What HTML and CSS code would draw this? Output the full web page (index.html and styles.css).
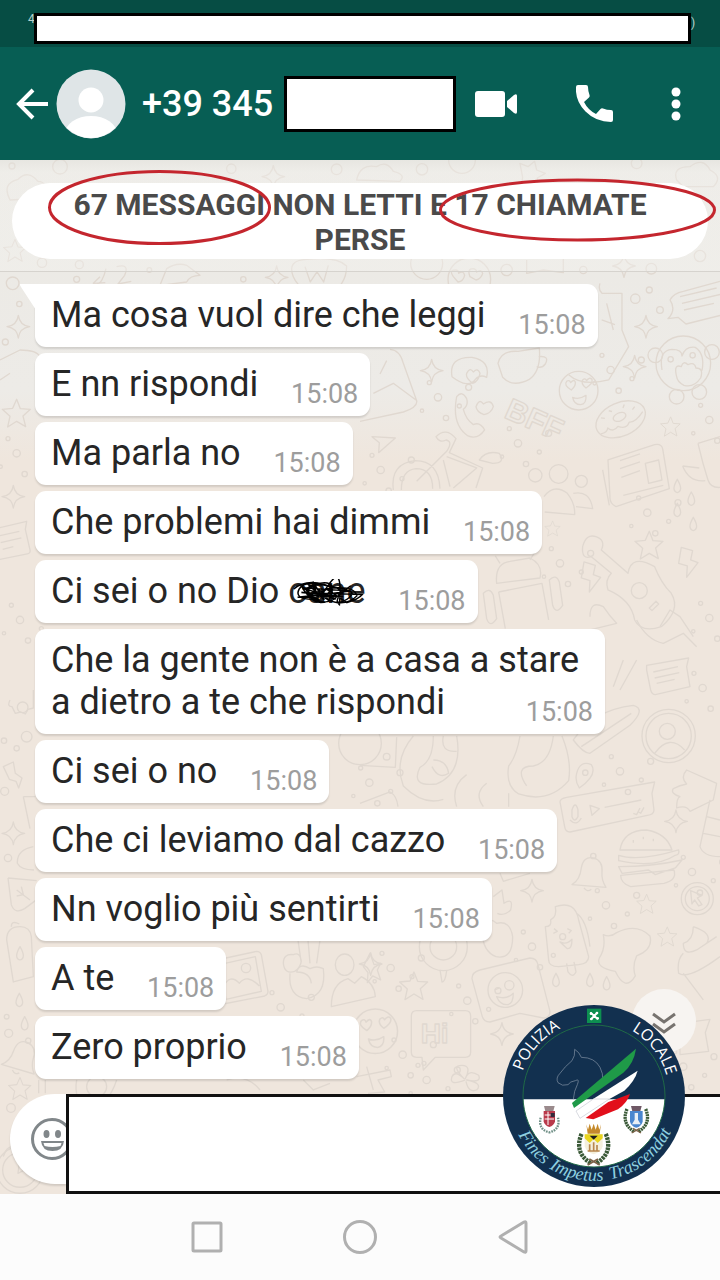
FILE: index.html
```html
<!DOCTYPE html>
<html lang="it">
<head>
<meta charset="utf-8">
<meta name="viewport" content="width=device-width, initial-scale=1">
<title>Chat</title>
<link rel="stylesheet" href="styles.css">
</head>
<body>
<div class="status">
  <span class="status__net">4</span>
  <div class="status__mask"></div>
  <span class="status__end">)</span>
</div>
<header class="bar">
  <button class="bar__btn bar__back" aria-label="Indietro">
    <svg width="34" height="34" viewBox="0 0 34 34" fill="none" stroke="#fff" stroke-width="4"><path d="M32 17H3M17 3 3 17l14 14"/></svg>
  </button>
  <svg class="bar__avatar" width="70" height="70" viewBox="0 0 70 70">
    <clipPath id="av"><circle cx="35" cy="35" r="34"/></clipPath>
    <circle cx="35" cy="35" r="34.500" fill="#dfe5e7"/>
    <g clip-path="url(#av)" fill="#fff"><circle cx="35" cy="31" r="12.500"/><ellipse cx="35" cy="65" rx="26" ry="18"/></g>
  </svg>
  <h1 class="bar__name">+39 345</h1>
  <div class="bar__mask"></div>
  <div class="bar__actions">
    <button class="bar__btn" aria-label="Videochiamata">
      <svg width="42" height="26" viewBox="0 0 42 26" fill="#fff"><rect width="30" height="26" rx="3"/><path d="M32 10l7-6q3-2 3 1v16q0 3-3 1l-7-6z"/></svg>
    </button>
    <button class="bar__btn" aria-label="Chiama">
      <svg width="37" height="37" viewBox="0 0 37 37" fill="#fff"><path d="M2 0h8q2 0 2 2 0 4 1.500 8 .5 1.500-.5 2.500L8 17q4 8 12 12l4.500-5q1-1 2.500-.5 4 1.500 8 1.500 2 0 2 2v8q0 2-2 2Q20 37 9.500 26.500T0 2Q0 0 2 0z"/></svg>
    </button>
    <button class="bar__btn" aria-label="Altre opzioni">
      <svg width="10" height="34" viewBox="0 0 10 34" fill="#fff"><circle cx="5" cy="5" r="4.500"/><circle cx="5" cy="17" r="4.500"/><circle cx="5" cy="29" r="4.500"/></svg>
    </button>
  </div>
</header>
<main class="chat">
  <svg class="wallpaper" viewBox="0 160 720 1034" preserveAspectRatio="xMidYMin slice" aria-hidden="true">
    <defs>
      <g id="smile"><circle r="58"/><path d="M-22-2q-24-14-14-26 8-6 12 4 10-12 14-2 2 12-12 24zM22-8q-16-12-10-24 8-8 12 2 8-12 16-4 4 12-18 26zM-18 20q20 8 40-6 2 26-16 28-20 0-24-22z"/></g>
      <path id="star" d="M0-42 11-14l30 2-22 20 8 32-27-16-27 17 7-32-23-21 31-3z"/>
      <path id="spark" d="M0-34q4 30 34 34-30 4-34 34-4-30-34-34 30-4 34-34z"/>
      <path id="bolt" d="M-20-44 14-34 8-6l22 8L-4 46l2-34-26-8z"/>
      <path id="drop" d="M0-20q20 34 0 40-20-6 0-40z"/>
      <g id="bell"><path d="M-50 24q24-14 28-50 6-36 36-30 30 8 26 44-2 22 12 44z"/><circle cx="14" cy="-62" r="8"/><path d="M-14 34q10 14 22 4"/></g>
      <g id="dots"><circle r="11"/><circle cx="64" cy="26" r="6"/><circle cx="24" cy="62" r="8"/><circle cx="-48" cy="40" r="5"/><circle cx="92" cy="-30" r="9"/><circle cx="-26" cy="-44" r="6"/></g>
      <g id="note"><path d="M-60-30 50-56l-4 24 14 62q2 10-8 12l-90 18q-10 0-12-8l-16-72q0-8 6-10z"/><path d="M-34-12 28-26M-28 8 34-6M-22 28 10 20"/></g>
      <g id="photo"><path d="M-70-40 50-66q10 0 14 10l20 110q0 10-10 14L-50 92q-10 0-12-10L-80-28q0-10 10-12z"/><path d="M-62-26 46-50l18 104-106 24zM-50 40q20-40 48-10 24-30 60 8"/><circle cx="18" cy="-16" r="14"/></g>
    </defs>
    <g transform="translate(0 160) scale(.3333)">
      <path d="M30 120q-26-50 24-62 30-30 60 6 30 0 26 50zM300 350l-20 20 36-2M288 376q20-6 30-50M350 320q40-10 24 26l-20 26 40-8M480 376l20-50q30-20 60-10l40 30q-30 0-40 20zM880 350q-20-50 40-52 90-10 120 20 0 60-60 90-80-10-100-58zM915 320l16 46 20-30 20 30 14-50"/>
      <use href="#spark" x="820" y="50"/><use href="#spark" x="830" y="352"/><use href="#spark" x="55" y="500"/><use href="#star" transform="translate(45 272) scale(.8)"/>
      <circle cx="38" cy="370" r="19"/><circle cx="58" cy="432" r="8"/><circle cx="16" cy="546" r="9"/><circle cx="126" cy="308" r="14"/><circle cx="238" cy="314" r="12"/><circle cx="230" cy="358" r="9"/><circle cx="694" cy="26" r="14"/><circle cx="36" cy="18" r="9"/><circle cx="180" cy="20" r="22"/><circle cx="448" cy="330" r="7"/><circle cx="730" cy="358" r="8"/><circle cx="1010" cy="28" r="16"/>
      <path d="M0 600l60-30q50 0 60 20M0 660l30-20"/><use href="#note" x="30" y="1140"/><use href="#dots" x="60" y="1380"/>
      <use href="#star" x="50" y="760"/><use href="#dots" x="50" y="880"/><use href="#spark" x="40" y="1010"/>
    </g>
    <g transform="translate(360 160) scale(.3333)">
      <circle cx="200" cy="310" r="48"/><circle cx="328" cy="358" r="64"/><path d="M280 350q-14-20 6-20 10 0 10 10 14-10 18 6-4 18-20 20zM330 350q-10-24 10-24 10 2 10 10 14-10 18 4-4 16-20 20zM500 300v40l50-10 60 8V296M-10 60q10-50 60-40 30-20 50 14 40 10 20 30zM480 10l24 10 20-16 6 26 26 10-24 14 2 30-26-16-24 10 4-26zM950 60q-14-40 40-40 40-30 60 10 40 20 10 50H970zM930 420q10-20 40-26l110-30M930 420q20 30-6 56l30-4 24 20 120-30M960 410l110-26M966 430l120-28M972 450l90-20M720 370q-6 20 6 30h60v110l20 50-60 100q-80 20-120-16M740 430l20 80M725 480l40 14"/>
      <use href="#spark" x="792" y="318"/><use href="#spark" x="858" y="500"/>
      <circle cx="186" cy="28" r="17"/><circle cx="1020" cy="288" r="17"/><circle cx="874" cy="326" r="16"/><circle cx="440" cy="330" r="17"/><circle cx="826" cy="416" r="14"/><circle cx="900" cy="450" r="10"/><circle cx="868" cy="390" r="9"/><circle cx="670" cy="330" r="11"/><circle cx="830" cy="10" r="16"/><circle cx="306" cy="0" r="40"/>
    </g>
    <g transform="translate(360 350) scale(.3333)">
      <path d="M0 214l130-28q44-14 40-34L130 40q-10-40-40-42M40 130l60-30 68 50M60 72l20-40M414 40q10-40 60-36l64-10q6 70-30 94-50 26-80-6zM536 20q34-4 20 22-10 14-26 8M276 80q-10-60 60-58 56 10 44 60-20-10-34 6-20 30-70-8zM320 70q10-20 20-4 14-14 20 4-4 24-22 30-22-16-18-30zM290 140q16-20 30 6 6 20-10 32 8 30 30 46 20-10 34 16-20 30-50 18-50-34-34-118zM348 170q10-26 22-8 24-16 30 8-6 20-28 24-22-8-24-24z"/>
      <ellipse cx="970" cy="40" rx="82" ry="82"/><circle cx="886" cy="16" r="22"/><circle cx="1056" cy="6" r="22"/><circle cx="932" cy="28" r="8"/><circle cx="998" cy="16" r="8"/><path d="M906 60q-10-60 30-62 30 0 30 20 10-30 40-26 30 20 20 70M950 80q-10-40 14-30 6-20 20-6 20-10 24 10 24 0 14 30-20 30-50 22-20-10-22-26z"/><circle cx="950" cy="140" r="22"/><circle cx="1018" cy="126" r="22"/>
      <use href="#smile" x="656" y="122"/><use href="#spark" x="215" y="62"/><use href="#spark" x="824" y="50"/><use href="#star" transform="translate(932 230) scale(.7)"/><use href="#star" x="868" y="586"/><use href="#bolt" x="692" y="680"/><use href="#bolt" x="984" y="636"/><use href="#star" transform="translate(578 536) scale(.55)"/>
      <g transform="rotate(24 480 180)" font-family="Liberation Sans" font-weight="700" font-size="92"><text x="442" y="220">BFF</text></g>
      <g transform="rotate(-24 782 208)"><ellipse cx="782" cy="208" rx="78" ry="50"/><ellipse cx="782" cy="200" rx="20" ry="12"/><path d="M710 224q20 4 26-8 10 20 30 8 20 20 36 2 14 10 50-12M730 180l10 6M760 170l8 6M810 172l-8 8M836 190l-10 6"/></g>
      <path d="M36 260l70 4-50 44 2-30zM100 420q-10-80 66-88 70 0 74 84M124 420q0-60 44-64 50 0 50 60M170 394l90-90q20-30-2-34-20 10-30-10 30-30 60 6l-20 42 100 46-20 60M250 330l20 80M260 320l90 34-70 60M358 330q20-30 60-20 20 30-20 30z"/>
      <circle cx="526" cy="376" r="20"/><circle cx="596" cy="372" r="28"/><circle cx="664" cy="394" r="18"/><path d="M552 440q30-40 70-10 24 30 22 64l-90-8M640 430q50-10 58 46l-50-6M744 330l140-46q20-4 24 12l20 120-160 54q-20-10-18-30zM728 360l20 106M856 340l40-10 10 60-40 10zM780 332l60-20M780 356l60-20M784 382l56-20M790 436l120-30M1014 280l66-20M1014 280q14 60 30 110 10 30 50 20M968 348l50 6M968 348q20 50 68 44"/>
      <path d="M668 590q10-40 40-30 30 10 16 40l80 70q10-60 80-20 20 50 50 80 30 50-30 100-60 20-80-20-10-60-80-90-10-30 10-50l-60-50q-30 10-26-30z"/><circle cx="838" cy="722" r="24"/><path d="M868 774l20-20 8 8-20 20z"/>
      <path d="M410 700q-6-60 40-66l60-10q40 20 30 60zM420 640l-14-22M510 630l14-22M416 726l130-26 20 110M416 726l20 110M370 730q20-20 30 6l10 70q-20 30-30 0zM568 690q20-20 30 6l10 70q-20 30-30 0zM690 800q0-50 40-30 20 30 40 50l-80 20M900 830l30-50 30 20 40 60"/>
      <use href="#drop" x="952" y="408"/><use href="#drop" x="994" y="446"/><use href="#drop" x="952" y="480"/><use href="#drop" x="1000" y="522"/><use href="#dots" x="234" y="142"/><use href="#dots" x="474" y="280"/><use href="#dots" x="862" y="488"/><use href="#dots" x="600" y="640"/><use href="#dots" x="1048" y="210"/><use href="#dots" x="752" y="60"/><use href="#dots" x="1048" y="804"/><use href="#dots" x="62" y="360"/>
    </g>
    <g transform="translate(360 620) scale(.3333)">
      <path d="M830 0q30 60 80 70l60-30 40 40M760 200l30-80M780 210l50-90M860 136l126-22-6 26 10 60-104 24q-10 0-14-14l-12-60zM880 156l74-16M884 174l74-16M890 190l54-12M640 360q60-90 180-104 40 10-10 60l-120 84q-20 0-50-40zM664 380l150-100"/>
      <circle cx="926" cy="348" r="80"/><circle cx="926" cy="348" r="68"/><circle cx="922" cy="334" r="24"/><path d="M884 400q44-60 90-10"/>
      <path d="M0 436l106 6 4-90M160 348q-60 70-30 150 60 60 120 40M290 348q20 110-60 144-80 10-50-50 40-20 40-94M220 420q40 0 46 40-30 20-50-20M250 348q-10 50 40 46M480 348q-10 60-34 90-10 60 30 84 90 30 150-40 10-60-20-134M580 348q-10 80-60 90-60 0-20 60M290 560q-20-60 30-96M380 490q-40 30-10 70M446 520v40M0 550l90-34q20 10 24 44"/>
      <circle cx="0" cy="370" r="64"/><circle cx="80" cy="410" r="10"/><path d="M650 460q10-40 44-26 20 30-36 70-14-20-8-44z"/><circle cx="676" cy="458" r="8"/>
      <path d="M600 546q0-10 20-14l264-46-8 34 6 50q0 14-20 16L630 636q-14 0-16-16zM690 556l28 10-22 20zM734 562l110-22M636 570q10-30 18 0v20q-10 20-18 0zM630 600q20 20 34-6M820 580l10 4 10-20M836 576l6 4 10-18"/>
      <path d="M980 450l90 40-10 50-70 34q-10-20-40-10 0-30 10-34-30-10-20-24 20-10 40-14-20-20 0-42zM1050 540l-30 140q10 30 60 30M1040 590l40 10M1030 640l50 10"/>
      <path d="M780 690q10-60 80-60 60 10 76 60zM776 706q60 20 180-16 4 14-10 16-60 40-170 16zM776 740q100 0 190-20l-20 24-60 20-20-14-80 10zM782 766l160-16q10 30-30 40l-100 10q-30-10-30-34zM820 660v8M850 650v8M880 656v8"/>
      <use href="#bell" x="686" y="770"/><use href="#spark" x="516" y="812"/><use href="#spark" x="948" y="604"/><use href="#star" transform="translate(860 852) scale(.7)"/><use href="#star" transform="translate(922 950) scale(.7)"/>
      <circle cx="1012" cy="836" r="48"/><circle cx="1012" cy="836" r="36"/><path d="M992 812l34 14-14 8 14 20-10 4-12-18-8 12z"/>
      <path d="M556 920q20 0 16-20 20-10 14-40 60-20 70 40l30 110q0 20-30 24l-60 6q-30 0-30-20zM620 1030l4 26q14 20 24 0l-6-30M650 880q30 20 40 100M580 940l12-6-10-8M622 926l12 6-8 8M600 966q20 10 36-8 0 30-14 28z"/>
      <path d="M730 944q20 10 40-6 60-30 100 10 10 40-40 60-14 30-4 60-30 50-60-14-60-10-48-40 20-30 12-70zM1000 920q0 40-30 50 0 40 40 20l60-40M970 1000q-20 20-14 60 30 20 124-50M970 1060l60 80M1000 920q60 20 40 50"/>
      <circle cx="250" cy="980" r="72"/><circle cx="250" cy="980" r="40"/><path d="M240 1050l6 36q10 0 14-34M370 910q20-20 40 0 40-10 48 40 0 70-50 60-50-20-38-100zM400 830l26-20 6 40q30-20 20 20-20 20-40 10M420 760l10 24 80-24M10 1040l20-40 12 34 20-4-10 20 10 30-24-12-16 20 2-30z"/>
      <use href="#dots" x="1028" y="204"/><use href="#dots" x="780" y="454"/><use href="#dots" x="738" y="856"/><use href="#dots" x="996" y="756"/><use href="#dots" x="516" y="980"/><use href="#dots" x="28" y="488"/><use href="#drop" x="588" y="1080"/><use href="#drop" x="690" y="1080"/><use href="#drop" x="740" y="1090"/>
    </g>
    <g transform="translate(220 900) scale(.3333)">
      <use href="#photo" x="60" y="220"/><path d="M190 190q0-30 30-26 20-10 24 20-4 20-20 30-30 10-34-24zM244 190l-10-70M270 190l-6-70M290 190l10-70M210 220q-6 70 50 76 60-10 50-90-20-10-40 0-30-20-40 10 40 0 44 34M334 320q0-70 50-84l20 14 20-20q40 20 42 60z"/><ellipse cx="374" cy="194" rx="28" ry="32"/>
      <use href="#spark" x="452" y="192"/><use href="#star" x="582" y="258"/><use href="#smile" transform="translate(466 394) scale(1.15)"/>
      <path d="M590 332h146q16 0 16 16v108q0 16-16 16h-90l-36 38-4-38h-16q-16 0-16-16V348q0-16 16-16zM780 210l150-36q20 0 24 20l36 140q0 20-20 20l-70-14-90 26q-20 0-24-20l-30-110q0-20 24-26z"/><text x="602" y="430" font-family="Liberation Sans" font-weight="700" font-size="84">Hi</text>
      <circle cx="856" cy="270" r="52"/><circle cx="868" cy="256" r="14"/><path d="M824 270l14-6M830 290q30 10 50-10 0 34-20 34-20 0-30-24z"/><use href="#spark" x="846" y="402"/>
      <path d="M736 540q-50 20-40-10 10-20 36 6-40-40-6-40 30 0 10 40 10-30 40-10 10 24-36 14 50 10 30 30-24 10-32-26M410 530l100-20 4 20-40 10 20 36-50 4M440 500l20 70M20 540q60-20 100 30M250 540l30 30 50-20"/>
      <use href="#dots" x="548" y="464"/><use href="#dots" x="512" y="204"/><use href="#dots" x="742" y="302"/><use href="#dots" x="620" y="540"/><use href="#dots" x="182" y="322"/>
      <path d="M1380 370l90-12-14 40 10 56-86 10z"/><use href="#dots" x="1390" y="500"/>
    </g>
    <g transform="translate(0 700) scale(.3333)">
      <path d="M30 0q-10 20 6 20l10 20 16-4 14 6 8-14 16-4V-30M10 200l30-14 6 34 20 14-10 30-8-20-20-6zM70 290h36M70 290l20 96M100 440q-50 10-48 50 10 20 50 20M24 534l86 8M24 534l10 80q10 30 40 12l40-30M50 570l40 30M64 560l6 24-20 4M20 720q0-40 40-40 30 0 34 30l6 120-60 16zM34 680q0-20 24-8"/><circle cx="68" cy="22" r="16"/>
      <use href="#drop" x="60" y="760"/><use href="#drop" x="58" y="900"/><use href="#drop" x="74" y="970"/><use href="#spark" x="40" y="400"/><use href="#bell" transform="translate(58 1080) rotate(12)"/><use href="#star" transform="translate(60 1166) scale(.8)"/>
      <circle cx="14" cy="274" r="12"/><circle cx="80" cy="110" r="16"/><circle cx="12" cy="122" r="8"/><circle cx="50" cy="145" r="8"/><circle cx="24" cy="474" r="11"/><circle cx="26" cy="1000" r="12"/><circle cx="20" cy="950" r="7"/><circle cx="33" cy="1224" r="13"/><path d="M116 1140v40M136 1140v40M230 1140q-10 60 30 80 60 10 90-80"/><circle cx="290" cy="1160" r="30"/>
      <circle cx="60" cy="1410" r="52"/><circle cx="60" cy="1410" r="70"/><path d="M60 1370l-6 50 20-10M10 1370q10-40 50-30"/>
    </g>
  </svg>

  <section class="banner">
    <h2 class="banner__pill">67 MESSAGGI NON LETTI E 17 CHIAMATE PERSE</h2>
    <svg class="banner__marks" viewBox="0 160 720 111" preserveAspectRatio="none" fill="none" stroke="#c4262e" stroke-width="3" aria-hidden="true">
      <ellipse cx="159.500" cy="207.500" rx="110" ry="36"/><ellipse cx="577.500" cy="210" rx="137" ry="30"/>
    </svg>
  </section>

  <ol class="messages">
    <li class="bubble bubble--first"><svg class="bubble__tail" width="16" height="26" viewBox="0 0 16 26" aria-hidden="true"><path d="M0 0h16v26L1 3q-2-3-1-3z" fill="#fff"/></svg><span class="bubble__text">Ma cosa vuol dire che leggi</span><time class="bubble__time">15:08</time></li>
    <li class="bubble"><span class="bubble__text">E nn rispondi</span><time class="bubble__time">15:08</time></li>
    <li class="bubble"><span class="bubble__text">Ma parla no</span><time class="bubble__time">15:08</time></li>
    <li class="bubble"><span class="bubble__text">Che problemi hai dimmi</span><time class="bubble__time">15:08</time></li>
    <li class="bubble"><span class="bubble__text">Ci sei o no Dio <span class="scratched">cane<svg class="scratched__ink" viewBox="0 0 200 80" preserveAspectRatio="none" fill="none" stroke="#000" stroke-width="4" aria-hidden="true"><path d="M10 30Q40 0 90 16T60 60Q10 60 24 30T110 24Q150 30 120 56T50 50Q30 20 80 12T100 66Q60 80 50 40T140 30Q180 36 150 60T90 50Q70 30 120 26T176 50Q150 80 110 66T96 30L150 70Q180 60 190 46L30 40 140 52 20 54 160 36 34 26 120 60 46 14 90 62 60 8 76 66 30 20Q60 90 100 20T130 76Q110 60 160 20"/></svg></span></span><time class="bubble__time">15:08</time></li>
    <li class="bubble bubble--long"><span class="bubble__text">Che la gente non è a casa a stare a dietro a te che rispondi</span><time class="bubble__time">15:08</time></li>
    <li class="bubble"><span class="bubble__text">Ci sei o no</span><time class="bubble__time">15:08</time></li>
    <li class="bubble"><span class="bubble__text">Che ci leviamo dal cazzo</span><time class="bubble__time">15:08</time></li>
    <li class="bubble"><span class="bubble__text">Nn voglio più sentirti</span><time class="bubble__time">15:08</time></li>
    <li class="bubble"><span class="bubble__text">A te</span><time class="bubble__time">15:08</time></li>
    <li class="bubble"><span class="bubble__text">Zero proprio</span><time class="bubble__time">15:08</time></li>
  </ol>

  <div class="composer">
    <button class="composer__emoji" aria-label="Emoji">
      <svg width="42" height="42" viewBox="0 0 42 42"><circle cx="21" cy="21" r="19.500" fill="none" stroke="#81878a" stroke-width="3"/><g fill="#81878a"><ellipse cx="15.500" cy="16" rx="3" ry="4"/><ellipse cx="27" cy="16" rx="3" ry="4"/><path d="M10 23h23q-1 10-11.500 10T10 23z"/></g><path d="M12.500 25h18l-1 3q-8 2-16 0z" fill="#fff"/></svg>
    </button>
    <input class="composer__field" type="text" aria-label="Messaggio">
  </div>

  <button class="scroll" aria-label="Vai in fondo">
    <svg width="24" height="22" viewBox="0 0 24 22" fill="none" stroke="#77736f" stroke-width="3"><path d="M1 2l11 8 11-8M1 12l11 8 11-8"/></svg>
  </button>

  <svg class="emblem" viewBox="39 74 546 546" role="img" aria-label="Polizia Locale">
    <defs>
      <path id="arcL" d="M98 273A226 226 0 0 1 312 121"/>
      <path id="arcR" d="M425 151A226 226 0 0 1 538 347"/>
      <path id="arcB" d="M85 463A255 255 0 0 0 553 430"/>
      <clipPath id="low"><rect x="90" y="357" width="450" height="250"/></clipPath>
      <g id="wreath" fill="none"><path d="M-28-18Q-46 26-6 50M28-18Q46 26 6 50" stroke="#3b5a38" stroke-width="10" stroke-dasharray="6 2"/><path d="M-14 54 10 40M14 54-10 40" stroke="#7d6348" stroke-width="4"/></g>
    </defs>
    <circle cx="312" cy="347" r="273" fill="#12304f"/>
    <circle cx="312" cy="347" r="213" fill="#fff" clip-path="url(#low)"/>
    <circle cx="312" cy="347" r="213" fill="none" stroke="#1f6a46" stroke-width="3"/>
    <rect x="291" y="85" width="43" height="43" fill="#0d8f50"/>
    <path d="M303 98l19 17M321 98l-17 18" stroke="#fff" stroke-width="6" stroke-linecap="round"/><g fill="#fff"><circle cx="303" cy="100" r="4"/><circle cx="321" cy="98" r="4"/><circle cx="323" cy="114" r="4"/><circle cx="304" cy="116" r="4"/></g>
    <path d="M250 357q2-26 12-44 8-20-6-12-16 2-22 12-18 6-30-6-8-14 6-28 14-20 36-38 10-14 8-34 14 8 20 24 40 0 56 30 10 20 8 36" fill="none" stroke="#8796a8" stroke-width="2"/>
    <path d="M246 368 438 205q-6 44-38 72L252 383z" fill="#1f9a48"/>
    <path d="M308 357 443 271q-8 30-40 60l-46 26z" fill="#fff"/>
    <path d="M258 392l52-36h48l-88 58z" fill="#fff" stroke="#c5c9d2" stroke-width="2"/>
    <path d="M287 413l68-48 65-24q-8 26-36 46l-74 30z" fill="#e20f1b"/>
    <g transform="translate(178 404)"><path d="M-26 8Q-34 44 0 52 34 44 26 8" fill="none" stroke="#6f8f86" stroke-width="7" stroke-dasharray="5 3"/><path d="M-16-27h32l-4 16h-24z" fill="#9a8a8c"/><path d="M-17-12h34v32q-4 12-17 16-13-4-17-16z" fill="#b93a4b"/><path d="M-14 0h28M-14 12h28M-4-10v40" stroke="#fff" stroke-width="3"/><path d="M4-6h12v12H4z" fill="#332b3d"/></g>
    <g transform="translate(439 404)"><use href="#wreath"/><path d="M-16-27h32l-4 16h-24z" fill="#6f5865"/><path d="M-19-12h38v32q-4 14-19 18-15-4-19-18z" fill="#4a86cf"/><path d="M-5-6H5v20l8 14h-26l8-14z" fill="#e8eef5"/></g>
    <g transform="translate(311 484)"><g transform="scale(1.300)"><use href="#wreath"/></g><path d="M-22-52l5 16 5-18 6 18 6-18 6 18 6-18 5 18 5-16-4 28h-36z" fill="#c58a2c"/><path d="M-27-22h54v36q-5 18-27 24-22-6-27-24z" fill="#f4efdc"/><path d="M-27-22h54v12L12 4 0-8-12 4-27-10z" fill="#e9d51f"/><path d="M-12-18h24L0-6z" fill="#1c1c1c"/><path d="M-12 28V8M0 28V2M10 28V10M-18 28h36" stroke="#b7864d" stroke-width="5"/></g>
    <g class="emblem__caps"><text><textPath href="#arcL">POLIZIA</textPath></text><text><textPath href="#arcR">LOCALE</textPath></text></g>
    <g class="emblem__motto"><text><textPath href="#arcB">Fines</textPath></text><text><textPath href="#arcB" startOffset="138">Impetus</textPath></text><text><textPath href="#arcB" startOffset="330">Trascendat</textPath></text></g>
  </svg>
</main>
<nav class="nav">
  <button class="nav__btn" aria-label="Recenti"><svg width="32" height="32" viewBox="0 0 32 32"><rect x="2" y="2" width="28" height="28" rx="1"/></svg></button>
  <button class="nav__btn" aria-label="Home"><svg width="34" height="34" viewBox="0 0 34 34"><circle cx="17" cy="17" r="15.500"/></svg></button>
  <button class="nav__btn" aria-label="Indietro"><svg width="32" height="34" viewBox="0 0 32 34"><path d="M29 3v28q0 2-2 1L4 18q-2-1 0-2L27 2q2-1 2 1z"/></svg></button>
</nav>
</body>
</html>
```
FILE: styles.css
```css
* { box-sizing: border-box; }

body {
  margin: 0;
  min-height: 100vh;
  display: flex;
  flex-direction: column;
  font-family: Roboto, "Liberation Sans", sans-serif;
  background: #fcfcfc;
}

button { border: 0; padding: 0; background: none; display: grid; place-items: center; }
svg { display: block; }

.status {
  display: flex;
  align-items: flex-start;
  padding: 13px 24px 3px 28px;
  background: #064d44;
  color: #b9d2cd;
  font-size: 12px;
  line-height: 12px;
}
.status__net { width: 6px; }
.status__mask { flex: 1; height: 31px; background: #fff; border: 3px solid #000; }
.status__end { width: 5px; line-height: 20px; }

.bar {
  display: flex;
  align-items: center;
  height: 113px;
  padding: 0 39px 0 16px;
  background: #075e54;
  color: #fff;
}
.bar__avatar { margin-left: 6px; flex: none; }
.bar__name { margin: 0 11px 0 16px; font-size: 36px; font-weight: 500; line-height: 42px; white-space: nowrap; }
.bar__mask { width: 172px; height: 56px; background: #fff; border: 3px solid #000; }
.bar__actions { flex: 1; display: flex; justify-content: space-between; align-items: center; margin-left: 19px; }

.chat {
  position: relative;
  flex: 1;
  display: flex;
  flex-direction: column;
  background: linear-gradient(#ebe9e4 0, #edebe7 230px, #efe6dd 300px);
  overflow: hidden;
}
.wallpaper {
  position: absolute;
  inset: 0;
  width: 100%;
  height: 100%;
  fill: none;
  stroke: #e0d8d0;
  stroke-width: 4;
  stroke-linejoin: round;
}

.banner {
  position: relative;
  padding: 23px 12px 12px;
  background: linear-gradient(#e2e2dd66 0, #f4f3f066 12px, #f4f3f066);
  border-bottom: 1px solid #d6d3ce;
}
.banner__pill {
  margin: 0;
  padding: 4px 60px 2px;
  border-radius: 38px;
  background: #fff;
  color: #4a4a4a;
  font-size: 30px;
  font-weight: 700;
  line-height: 35px;
  text-align: center;
}
.banner__marks { position: absolute; inset: 0; width: 100%; height: 100%; }

.messages {
  position: relative;
  flex: 1;
  display: flex;
  flex-direction: column;
  align-items: flex-start;
  gap: 6px;
  margin: 0;
  padding: 12px 20px 15px 35px;
  list-style: none;
}
.bubble {
  position: relative;
  display: grid;
  max-width: 570px;
  padding: 10px 12px 8px 16px;
  border-radius: 11px;
  background: #fff;
  box-shadow: 0 2px 2px #0000001f;
}
.bubble--first { border-top-left-radius: 0; }
.bubble__tail { position: absolute; left: -15px; top: 0; }
.bubble__text, .bubble__time { grid-area: 1 / 1; }
.bubble__text { padding: 0 100px 3px 0; color: #262626; font-size: 36px; line-height: 42px; }
.bubble--long .bubble__text { padding-right: 4px; }
.bubble__time { align-self: end; justify-self: end; color: #9d9d9d; font-size: 27px; line-height: 27px; }

.scratched { position: relative; display: inline-block; }
.scratched__ink { position: absolute; left: 2px; top: 9px; width: 76px; height: 27px; }

.composer { position: relative; display: flex; align-items: flex-start; padding-left: 10px; }
.composer__emoji {
  flex: none;
  width: 56px;
  height: 90px;
  padding-left: 21px;
  justify-items: start;
  overflow: hidden;
  background: #fff;
  border-radius: 45px 0 0 45px;
  box-shadow: 0 2px 2px #0000001f;
}
.composer__field {
  flex: 1;
  min-width: 0;
  height: 100px;
  padding: 0 20px;
  border: 3px solid #111;
  border-right: 0;
  border-radius: 0;
  background: #fff;
  font: 36px Roboto, sans-serif;
}

.scroll {
  position: absolute;
  right: 24px;
  bottom: 141px;
  width: 64px;
  height: 64px;
  padding-top: 3px;
  border-radius: 50%;
  background: #f7f4f1;
}
.emblem { position: absolute; right: 35px; bottom: 7px; width: 182px; height: 182px; }
.emblem__caps { fill: #fff; font-family: "Open Sans", sans-serif; font-size: 48px; }
.emblem__motto { fill: #8fd0e0; font-family: "Liberation Serif", serif; font-style: italic; font-size: 54px; }

.nav {
  display: flex;
  justify-content: center;
  align-items: center;
  gap: 120px;
  height: 86px;
  background: #fcfcfc;
}
.nav svg { fill: none; stroke: #b0b0b0; stroke-width: 3; }
```
